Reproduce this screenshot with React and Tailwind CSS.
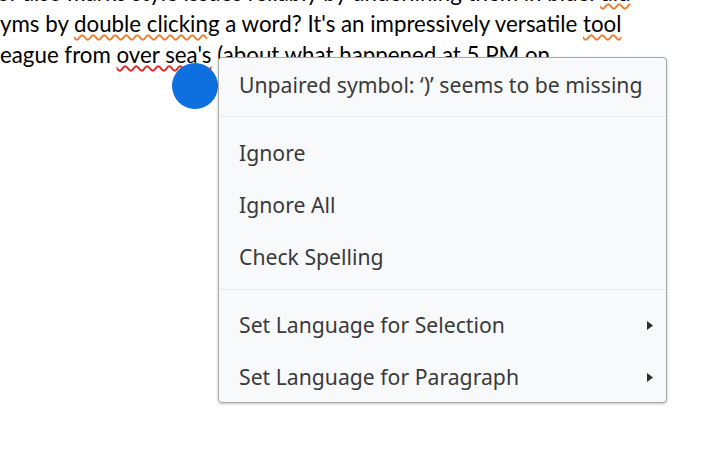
import React from "react";

// Spell-check context menu over a document fragment
const orange = "underline decoration-wavy decoration-[#ee7d2c] decoration-[1.5px] underline-offset-[2px]";
const red = "underline decoration-wavy decoration-[#e8231f] decoration-[1.5px] underline-offset-[2px]";

const Arrow = () => (
  <svg width="6" height="9" viewBox="0 0 6 9" className="fill-[#2e2e2e]">
    <path d="M0 0 L6 4.5 L0 9 Z" />
  </svg>
);

const Item = ({ label, sub }) => (
  <div className="h-[52px] flex items-center justify-between pl-[20px] pr-[13px]">
    <span>{label}</span>
    {sub && <Arrow />}
  </div>
);

export default function App() {
  return (
    <div className="relative w-[714px] h-[456px] bg-white overflow-hidden">
      <div
        className="text-black text-[22.3px] leading-[31px] whitespace-nowrap mt-[-23px]"
        style={{ fontFamily: "Lato, 'Liberation Sans', sans-serif" }}
      >
        <div className="ml-[-3px]">
          or also marks style issues reliably by underlining them in blue. <span className={orange}>did</span>
        </div>
        <div>
          yms by <span className={orange}>double clicking</span> a word? It's an impressively versatile{" "}
          <span className={orange}>tool</span>
        </div>
        <div>
          eague from <span className={red}>over sea's</span> (about what happened at 5 PM on
        </div>
      </div>

      <div className="absolute left-[172px] top-[63px] w-[46px] h-[46px] rounded-full bg-[#0e6fde]" />

      <div
        className="absolute left-[218px] top-[57px] w-[449px] h-[346px] bg-[#f8f9fa] border border-[#a8a8a8] rounded-[4px] shadow-[0_1px_3px_rgba(0,0,0,0.25)] text-[21.2px] text-[#3a3a3a]"
        style={{ fontFamily: "'Noto Sans', 'Open Sans', sans-serif" }}
      >
        <div className="h-[58px] flex items-center pl-[20px] pb-[4px]">
          Unpaired symbol: ‘)’ seems to be missing
        </div>
        <div className="h-px bg-[#e9e9e9]" />
        <div className="pt-[10px] pb-[6px]">
          <Item label="Ignore" />
          <Item label="Ignore All" />
          <Item label="Check Spelling" />
        </div>
        <div className="h-px bg-[#e9e9e9]" />
        <div className="pt-[9px]">
          <Item label="Set Language for Selection" sub />
          <Item label="Set Language for Paragraph" sub />
        </div>
      </div>
    </div>
  );
}
